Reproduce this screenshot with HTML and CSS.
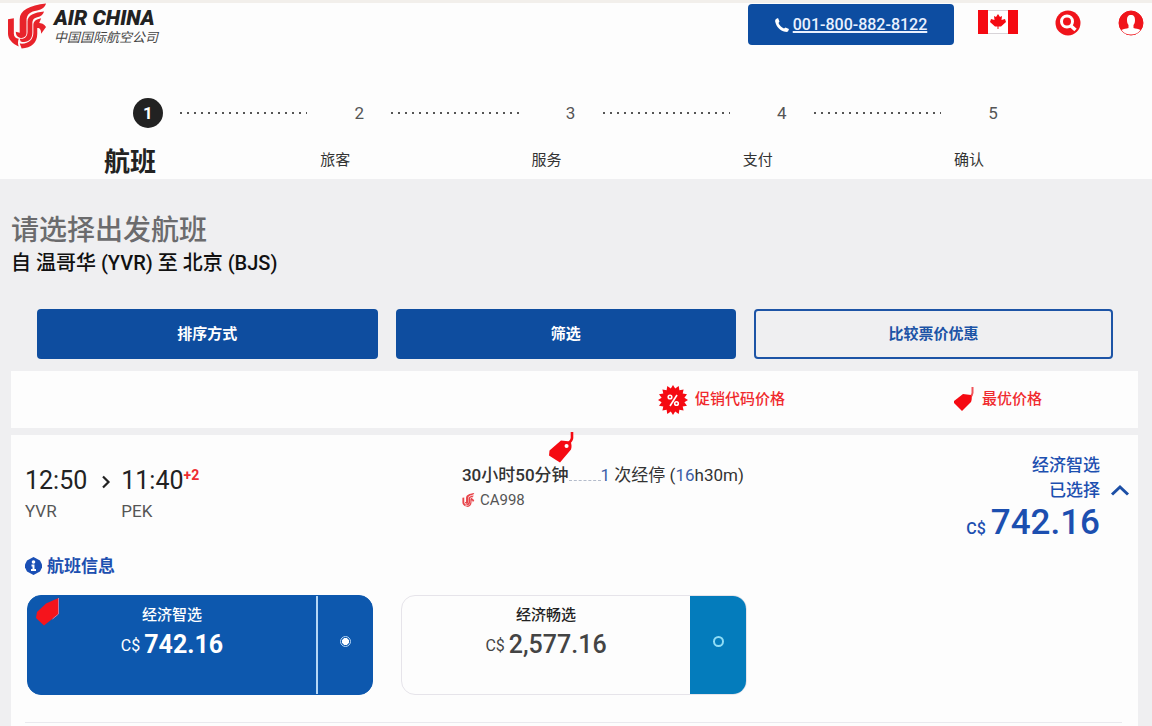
FILE: index.html
```
<!DOCTYPE html>
<html lang="zh-CN">
<head>
    <meta charset="UTF-8">
    <meta name="viewport" content="width=device-width, initial-scale=1.0">
    <title>请选择出发航班</title>
    <link rel="stylesheet" href="styles.css">
</head>
<body>
    <!-- shared icons -->
    <svg class="sprite" width="0" height="0" aria-hidden="true">
        <symbol id="tag" viewBox="0 0 26 31">
            <path d="M24 0v6c0 2-1 3-3 5" fill="none" stroke="currentColor" stroke-width="2.6"/>
            <path fill-rule="evenodd" d="M13 8.500l9.500 1c1 2 1.500 5 .5 8L12 30.500 8 28 1 23.500l.5-5zM18.500 12a2 2 0 1 0 .1 4 2 2 0 0 0 0-4z" fill="currentColor"/>
        </symbol>
        <symbol id="phoenix" viewBox="0 0 40 46">
            <path d="M0 16l6-1v16c0 3 2 5 5 5-1 3-1 5 0 8C4 41 0 36 0 31z" fill="currentColor"/>
            <path d="M39 0c-1 4-4 6-9 7-7 1-11 4-11 10v13c0 4-3 6-7 5-3-1-4-3-4-6l4 1V16C12 7 22 2 39 0z" fill="currentColor"/>
            <path d="M37 8c-1 3-3 5-7 6-4 1-5 3-5 7v9c0 7-5 11-12 9l-1-3c5 1 8-2 8-7V18c0-6 7-9 17-10z" fill="currentColor"/>
            <path d="M34 15l-2 5c2 0 5 1 7 4l-5 7c0-4-1-6-4-6v6c0 9-6 15-16 15l-2-5c9 1 14-4 14-11v-8c0-4 3-6 8-7z" fill="currentColor"/>
        </symbol>
    </svg>

    <header class="header">
        <div class="topbar">
            <a class="brand" href="#">
                <svg class="brand-logo" aria-hidden="true"><use href="#phoenix"/></svg>
                <span class="brand-text">
                    <span class="brand-en">AIR CHINA</span>
                    <span class="brand-cn">中国国际航空公司</span>
                </span>
            </a>
            <a class="phone" href="tel:001-800-882-8122">
                <svg width="14" height="14" viewBox="0 0 14 14" aria-hidden="true"><path d="M1 1l2-1 1.500 3.500L3.500 5c1 2.500 3 4.500 5.500 5.500l1.500-1L14 11l-1 2.500c-1 .5-2 .5-3 .3C5 12.500 1.500 9 .3 4 0 3 0 2 1 1z" fill="#fff"/></svg>
                <span>001-800-882-8122</span>
            </a>
            <button class="icon-button flag" aria-label="Canada">
                <svg width="40" height="24" viewBox="0 0 40 24">
                    <path d="M0 0h40v24H0z" fill="#fff"/>
                    <path d="M10 .5h20M10 23.500h20" stroke="#d8d4d8"/>
                    <path d="M0 0h10v24H0zM30 0h10v24H30z" fill="#f50a12"/>
                    <path d="M20 4l2 3 2-1-.5 4L27 9l1 3-5 4.500h-2.500V19h-1v-2.500H17L12 12l1-3 3.500 1L16 6l2 1z" fill="#f50a12"/>
                </svg>
            </button>
            <button class="icon-button search" aria-label="搜索">
                <svg width="26" height="26" viewBox="0 0 26 26">
                    <circle cx="13" cy="13" r="12.500" fill="#f0141b"/>
                    <circle cx="12" cy="11.500" r="5.500" fill="none" stroke="#fff" stroke-width="3"/>
                    <path d="M15.500 15.500l5 4.500" stroke="#fff" stroke-width="3.500"/>
                </svg>
            </button>
            <button class="icon-button user" aria-label="我的账户">
                <svg width="26" height="26" viewBox="0 0 26 26">
                    <circle cx="13" cy="13" r="12" fill="#f0141b" stroke="#f0141b"/>
                    <path d="M13 5c-3 0-4 2-4 5 0 2 .5 4 1.500 5v3c-2 1-5 .5-7 2 2 3 5.500 4.500 9.500 4.500s7.500-1.500 9.500-4.500c-2-1.500-5-1-7-2v-3c1-1 1.500-3 1.500-5 0-3-1-5-4-5z" fill="#fff"/>
                </svg>
            </button>
        </div>

        <ol class="steps">
            <li class="step active">
                <div class="step-top"><span class="step-number">1</span><span class="step-line"></span></div>
                <div class="step-label">航班</div>
            </li>
            <li class="step">
                <div class="step-top"><span class="step-number">2</span><span class="step-line"></span></div>
                <div class="step-label">旅客</div>
            </li>
            <li class="step">
                <div class="step-top"><span class="step-number">3</span><span class="step-line"></span></div>
                <div class="step-label">服务</div>
            </li>
            <li class="step">
                <div class="step-top"><span class="step-number">4</span><span class="step-line"></span></div>
                <div class="step-label">支付</div>
            </li>
            <li class="step">
                <div class="step-top"><span class="step-number">5</span></div>
                <div class="step-label">确认</div>
            </li>
        </ol>
    </header>

    <main class="main">
        <h1>请选择出发航班</h1>
        <h2>自 温哥华 (YVR) 至 北京 (BJS)</h2>

        <div class="actions">
            <button class="action">排序方式</button>
            <button class="action">筛选</button>
            <button class="action outline">比较票价优惠</button>
        </div>

        <div class="legend">
            <div class="legend-item">
                <svg width="30" height="30" viewBox="0 0 30 30" aria-hidden="true">
                    <path d="M15 0l2.200 3.600L20.700 1l.7 4.300 4.200-.9-.9 4.200 4.300.7-2.600 3.500L30 15l-3.600 2.200 2.600 3.500-4.300.7.9 4.200-4.200-.9-.7 4.300-3.500-2.600L15 30l-2.200-3.600L9.300 29l-.7-4.300-4.200.9.9-4.200-4.300-.7 2.600-3.500L0 15l3.600-2.200L1 9.300l4.300-.7-.9-4.200 4.200.9L9.300 1l3.500 2.600z" fill="#f50a12"/>
                    <path d="M19 10l-7 11" stroke="#fff" stroke-width="1.600"/>
                    <circle cx="12" cy="12" r="1.800" fill="none" stroke="#fff" stroke-width="1.600"/>
                    <circle cx="18.500" cy="18.500" r="1.800" fill="none" stroke="#fff" stroke-width="1.600"/>
                </svg>
                <span>促销代码价格</span>
            </div>
            <div class="legend-item">
                <svg width="22" height="25" viewBox="0 0 22 25" aria-hidden="true">
                    <path d="M19.500 0v6c0 2-1 3-3 5" fill="none" stroke="#f0555a" stroke-width="2"/>
                    <path d="M10 7l8 1c1 2 1 4 0 7l-9 9-8-8v-2z" fill="#f50a12"/>
                </svg>
                <span>最优价格</span>
            </div>
        </div>

        <section class="flight">
            <svg class="best-tag" aria-hidden="true"><use href="#tag"/></svg>
            <div class="summary">
                <div class="times">
                    <div>
                        <div class="time">12:50</div>
                        <div class="airport">YVR</div>
                    </div>
                    <svg class="arrow" width="10" height="14" viewBox="0 0 10 14" aria-hidden="true"><path d="M2 1.500l5.500 5.500L2 12.500" fill="none" stroke="#222" stroke-width="2.200"/></svg>
                    <div>
                        <div class="time">11:40<sup>+2</sup></div>
                        <div class="airport">PEK</div>
                    </div>
                </div>
                <div class="duration">
                    <div class="duration-text"><strong>30小时50分钟</strong><span class="dots"></span><a href="#">1</a> 次经停 (<a href="#">16</a>h30m)</div>
                    <div class="flight-number">
                        <svg width="13" height="14" aria-hidden="true"><use href="#phoenix"/></svg>
                        <span>CA998</span>
                    </div>
                </div>
                <button class="selected">
                    <span class="selected-info">
                        <span class="selected-name">经济智选</span>
                        <span class="selected-name">已选择</span>
                        <span class="selected-price"><small>C$</small>742.16</span>
                    </span>
                    <svg class="chevron" width="20" height="12" viewBox="0 0 20 12" aria-hidden="true"><path d="M2 10.500L10 3l8 7.500" fill="none" stroke="#1c4fa6" stroke-width="3"/></svg>
                </button>
            </div>

            <a class="info" href="#">
                <svg width="17" height="18" viewBox="0 0 17 18" aria-hidden="true">
                    <path d="M8.500 0L15 3.500l2 4v3L15 14.500 8.500 18 2 14.500l-2-4v-3l2-4z" fill="#1a4fb5"/>
                    <circle cx="8.500" cy="5" r="1.800" fill="#fff"/>
                    <path d="M6.500 7.500h3V12h1.500v2H6v-2h1.500V9.500h-1z" fill="#fff"/>
                </svg>
                <span>航班信息</span>
            </a>

            <div class="fares">
                <label class="fare chosen">
                    <svg class="fare-tag" width="24" height="28" viewBox="0 0 24 28" aria-hidden="true">
                        <path d="M23.500 0v16L9 27.500 1 20l1-6 9-8.500z" fill="#f5141c"/>
                        <path d="M23.500 0v16l-6 5" fill="none" stroke="#c67aa0"/>
                    </svg>
                    <span class="fare-body">
                        <span class="fare-name">经济智选</span>
                        <span class="fare-price"><small>C$</small>742.16</span>
                    </span>
                    <span class="fare-radio"><input type="radio" name="fare" checked></span>
                </label>
                <label class="fare">
                    <span class="fare-body">
                        <span class="fare-name">经济畅选</span>
                        <span class="fare-price"><small>C$</small>2,577.16</span>
                    </span>
                    <span class="fare-radio"><input type="radio" name="fare"></span>
                </label>
            </div>
        </section>
    </main>
</body>
</html>
```
FILE: styles.css
```
* {
    box-sizing: border-box;
}

body {
    margin: 0;
    font-family: Roboto, "Noto Sans CJK SC", sans-serif;
    font-size: 15px;
    color: #333;
    background-color: #efeff1;
}

a {
    color: inherit;
    text-decoration: none;
}

button {
    font-family: inherit;
    cursor: pointer;
}

.sprite {
    position: absolute;
}

.header {
    padding-bottom: 1px;
    background-color: #fdfdfd;
    border-top: 3px solid #f2efeb;
}

.topbar {
    display: flex;
    align-items: flex-start;
    padding: 0 8px;
}

.brand {
    display: flex;
    gap: 7px;
    margin-right: auto;
}

.brand-logo {
    width: 39px;
    height: 46px;
    color: #e8232b;
}

.brand-text {
    display: flex;
    flex-direction: column;
    padding-top: 4px;
    white-space: nowrap;
}

.brand-en {
    font-size: 21px;
    line-height: 22px;
    font-weight: 900;
    font-style: italic;
    color: #222;
}

.brand-cn {
    font-size: 13px;
    line-height: 18px;
    font-style: italic;
    color: #444;
}

.phone {
    display: flex;
    align-items: center;
    justify-content: center;
    gap: 4px;
    width: 206px;
    height: 41px;
    margin-top: 1px;
    border-radius: 4px;
    background-color: #0d4da1;
    color: #e9f1ff;
    font-size: 16px;
    font-weight: 500;
}

.phone span {
    text-decoration: underline;
    text-decoration-thickness: 2px;
}

.icon-button {
    display: flex;
    padding: 0;
    border: none;
    background: none;
}

.flag {
    margin: 7px 0 0 24px;
}

.search,
.user {
    margin: 7px 0 0 37px;
}

.steps {
    display: flex;
    list-style: none;
    margin: 0;
    padding: 49px 143px 0 104px;
}

.step {
    flex: 1;
}

.step:last-child {
    flex: 0 0 60px;
}

.step-top {
    display: flex;
    align-items: center;
    padding-left: 29px;
    gap: 17px;
}

.step-number {
    width: 30px;
    height: 30px;
    border-radius: 50%;
    font-size: 17px;
    line-height: 30px;
    text-align: center;
    color: #555;
}

.step-line {
    flex: 1;
    height: 2px;
    margin-right: 8px;
    background: repeating-linear-gradient(to right, #555 0 2px, transparent 2px 7px);
}

.step-label {
    padding: 16px 0 0 5px;
    font-size: 15px;
    line-height: 32px;
}

.active .step-number {
    background-color: #222;
    color: #fff;
    font-weight: bold;
}

.active .step-label {
    padding: 18px 0 0;
    font-size: 26px;
    font-weight: bold;
    color: #222;
}

.main {
    padding: 35px 14px 0 11px;
}

h1 {
    margin: 0;
    font-size: 28px;
    line-height: 34px;
    font-weight: 500;
    color: #6b6b6d;
}

h2 {
    margin: 0;
    font-size: 20px;
    line-height: 30px;
    font-weight: 500;
    color: #111;
}

.actions {
    display: flex;
    gap: 18px;
    padding: 31px 25px 12px 26px;
}

.action {
    flex: 340;
    height: 50px;
    padding: 0 6px 4px;
    border: none;
    border-radius: 4px;
    background-color: #0e4d9f;
    color: #fff;
    font-size: 15px;
    font-weight: bold;
}

.action.outline {
    flex: 359;
    padding: 0 4px 4px;
    border: 2px solid #1d54a6;
    background: none;
    color: #1d54a6;
}

.legend {
    display: flex;
    justify-content: flex-end;
    gap: 168px;
    height: 57px;
    margin-bottom: 7px;
    padding-right: 96px;
    background-color: #fdfdfd;
}

.legend-item {
    display: flex;
    align-items: center;
    gap: 7px;
    color: #f02a2e;
    font-weight: 500;
}

.legend-item span {
    padding-bottom: 4px;
}

.flight {
    position: relative;
    padding: 18px 8px 4px 14px;
    background-color: #fdfdfd;
}

/* sits over the top edge of the card */
.best-tag {
    position: absolute;
    top: -3px;
    left: 537px;
    width: 26px;
    height: 31px;
    color: #f50a12;
}

.summary {
    display: grid;
    grid-template-columns: 39% 1fr auto;
    column-gap: 6px;
}

.times {
    display: flex;
    align-items: flex-start;
    padding-top: 12px;
}

.time {
    font-size: 25px;
    line-height: 32px;
    color: #222;
}

.time sup {
    font-size: 14px;
    line-height: 14px;
    font-weight: bold;
    color: #ee2b30;
}

.arrow {
    margin: 10px 10px 0 14px;
}

.airport {
    font-size: 17px;
    line-height: 28px;
    color: #555;
}

.duration {
    padding-top: 8px;
}

.duration-text {
    font-size: 17px;
    line-height: 28px;
    white-space: nowrap;
}

.duration-text strong {
    font-weight: 500;
}

.duration-text a {
    color: #3c5fa8;
}

.dots {
    display: inline-block;
    width: 32px;
    border-bottom: 1px dashed #b4bccb;
}

.flight-number {
    display: flex;
    align-items: center;
    gap: 5px;
    line-height: 22px;
    color: #555;
}

.flight-number svg {
    color: #e8454b;
}

.selected {
    display: flex;
    align-items: flex-start;
    gap: 10px;
    padding: 0;
    border: none;
    background: none;
    color: #1c4fb0;
}

.selected-info {
    display: flex;
    flex-direction: column;
    text-align: right;
}

.selected-name {
    font-size: 17px;
    line-height: 25px;
    font-weight: 500;
}

.selected-price {
    font-size: 35px;
    line-height: 40px;
    font-weight: 500;
}

.selected-price small {
    margin-right: 5px;
    font-size: 16px;
}

.chevron {
    margin-top: 31px;
}

.info {
    display: inline-flex;
    align-items: center;
    gap: 5px;
    margin-top: 5px;
    font-size: 17px;
    line-height: 24px;
    font-weight: bold;
    color: #1c4fb0;
}

.fares {
    display: flex;
    gap: 28px;
    margin-right: 8px;
    padding: 16px 0 27px 2px;
    border-bottom: 1px solid #e9e9ee;
}

.fare {
    position: relative;
    display: flex;
    width: 346px;
    height: 100px;
    border: 1px solid #e6e4ea;
    border-radius: 14px;
    overflow: hidden;
    cursor: pointer;
}

.fare-tag {
    position: absolute;
    top: 2px;
    left: 7px;
}

.fare-body {
    flex: 1;
    display: flex;
    flex-direction: column;
    align-items: center;
    padding-top: 7px;
}

.fare-name {
    font-size: 15px;
    line-height: 24px;
    font-weight: 500;
    color: #222;
}

.fare-price {
    font-size: 25px;
    line-height: 36px;
    font-weight: 500;
    color: #444;
}

.fare-price small {
    margin-right: 4px;
    font-size: 16px;
    font-weight: normal;
    vertical-align: 2px;
}

.fare-radio {
    display: flex;
    align-items: center;
    justify-content: center;
    width: 56px;
    padding-bottom: 8px;
    background-color: #047cbc;
}

.fare-radio input {
    appearance: none;
    width: 11px;
    height: 11px;
    margin: 0;
    border: 2px solid #8fdcf5;
    border-radius: 50%;
}

.chosen {
    border-color: #0d58ae;
    background-color: #0d58ae;
}

.chosen .fare-name,
.chosen .fare-price {
    color: #fff;
}

.chosen .fare-price {
    font-weight: bold;
}

.chosen .fare-radio {
    border-left: 2px solid #b5d6f5;
    background-color: #0d58ae;
}

.chosen input {
    border: 1px solid #b5d6f5;
    background: radial-gradient(#fff 50%, #0d58ae 60%);
}
```
